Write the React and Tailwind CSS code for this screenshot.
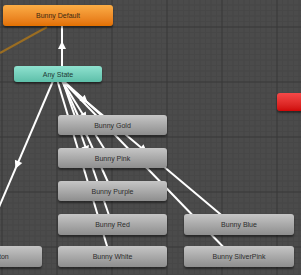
import React from 'react';

// Animator graph: nodes sit on a free canvas, transitions drawn in svg underneath
const nodes = [
  { id: 'default', label: 'Bunny Default', x: 3, y: 5, w: 110, h: 21, kind: 'orange' },
  { id: 'any', label: 'Any State', x: 14, y: 66, w: 88, h: 16, kind: 'teal' },
  { id: 'gold', label: 'Bunny Gold', x: 58, y: 115, w: 109, h: 20, kind: 'gray' },
  { id: 'pink', label: 'Bunny Pink', x: 58, y: 148, w: 109, h: 20, kind: 'gray' },
  { id: 'purple', label: 'Bunny Purple', x: 58, y: 181, w: 109, h: 20, kind: 'gray' },
  { id: 'red', label: 'Bunny Red', x: 58, y: 214, w: 109, h: 21, kind: 'gray' },
  { id: 'white', label: 'Bunny White', x: 58, y: 246, w: 109, h: 21, kind: 'gray' },
  { id: 'cotton', label: 'Bunny Cotton', x: -67, y: 246, w: 109, h: 21, kind: 'gray' },
  { id: 'blue', label: 'Bunny Blue', x: 184, y: 214, w: 110, h: 21, kind: 'gray' },
  { id: 'silver', label: 'Bunny SilverPink', x: 184, y: 246, w: 110, h: 21, kind: 'gray' },
  { id: 'err', label: '', x: 277, y: 93, w: 60, h: 18, kind: 'red' },
];

const kindClass = {
  orange: 'bg-gradient-to-b from-[#fbad45] to-[#e27000] text-[#3b2a12]',
  teal: 'bg-gradient-to-b from-[#8fe2d0] to-[#5dbfa9] text-[#1f3a34]',
  gray: 'bg-gradient-to-b from-[#c6c6c6] to-[#8e8e8e] text-[#2c2c2c]',
  red: 'bg-gradient-to-b from-[#f64848] to-[#cf0606] text-white',
};

const transitions = [
  { from: [62, 74], to: [62, 16] },
  { from: [56, 74], to: [-22, 256] },
  { from: [58, 76], to: [112, 125] },
  { from: [59, 76], to: [110, 158] },
  { from: [60, 76], to: [112, 191] },
  { from: [61, 76], to: [112, 224] },
  { from: [56, 76], to: [110, 256] },
  { from: [56, 76], to: [232, 224] },
  { from: [58, 76], to: [232, 256] },
];

const Grid = () => {
  const minor = [];
  const major = [];
  for (let i = -20; i < 60; i++) {
    const p = 2 + i * 5.5;
    const q = 27 + i * 5.5;
    const isMajor = i % 10 === 0;
    if (p >= 0 && p <= 301) (isMajor ? major : minor).push(<line key={'v' + i} x1={p} y1={0} x2={p} y2={275} />);
    if (q >= 0 && q <= 275) (isMajor ? major : minor).push(<line key={'h' + i} x1={0} y1={q} x2={301} y2={q} />);
  }
  return (
    <>
      <g stroke="#474747" strokeWidth="1">{minor}</g>
      <g stroke="#383838" strokeWidth="1">{major}</g>
    </>
  );
};

const Arrow = ({ from, to, color = '#fff' }) => {
  const [x1, y1] = from;
  const [x2, y2] = to;
  const mx = (x1 + x2) / 2;
  const my = (y1 + y2) / 2;
  const ang = (Math.atan2(y2 - y1, x2 - x1) * 180) / Math.PI;
  return (
    <g>
      <line x1={x1} y1={y1} x2={x2} y2={y2} stroke={color} strokeWidth="2" />
      <polygon points="4,0 -4,-4 -4,4" fill={color} transform={`translate(${mx} ${my}) rotate(${ang})`} />
    </g>
  );
};

export default function App() {
  return (
    <div className="relative w-[301px] h-[275px] overflow-hidden bg-[#4b4b4b] font-['Liberation_Sans',Arial,sans-serif]">
      <svg className="absolute inset-0" width="301" height="275">
        <Grid />
        <line x1="0" y1="53" x2="47" y2="27" stroke="#9a6d22" strokeWidth="2" />
        {transitions.map((t, i) => (
          <Arrow key={i} from={t.from} to={t.to} />
        ))}
      </svg>
      {nodes.map(n => (
        <div
          key={n.id}
          className={`absolute flex items-center justify-center rounded-[3px] shadow-[0_2px_2px_rgba(0,0,0,0.45)] text-[7px] leading-none whitespace-nowrap ${kindClass[n.kind]}`}
          style={{ left: n.x, top: n.y, width: n.w, height: n.h }}
        >
          {n.label}
        </div>
      ))}
    </div>
  );
}
